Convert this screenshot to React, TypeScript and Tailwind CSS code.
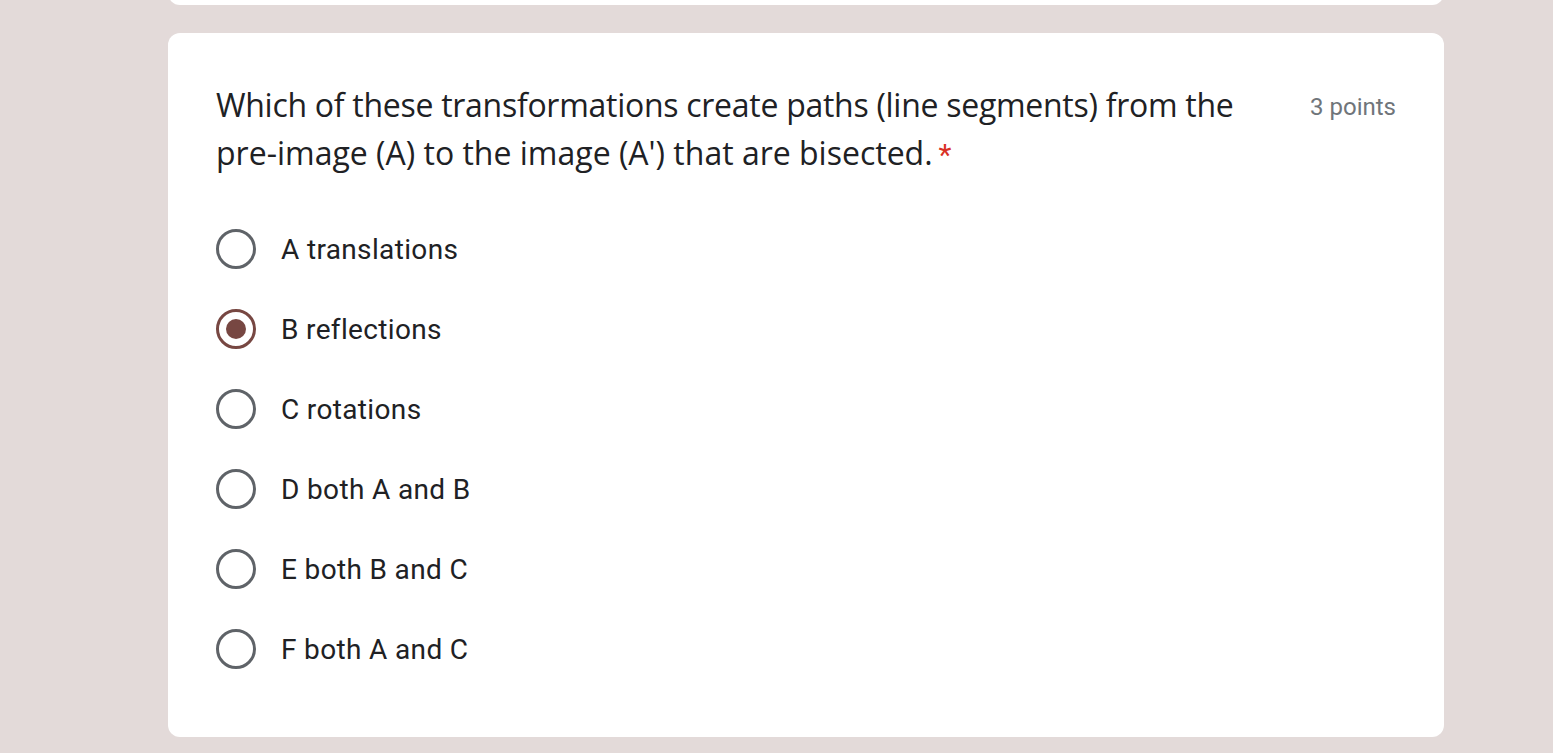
import React from "react";

const options = [
  "A translations",
  "B reflections",
  "C rotations",
  "D both A and B",
  "E both B and C",
  "F both A and C",
];

export default function App() {
  return (
    <div className="min-h-[753px] w-full bg-[#e3dad9] overflow-hidden">
      <div className="ml-[168px] w-[1276px]">
        <div className="-mt-[20px] h-[25px] rounded-[12px] bg-white" />
        <div className="mt-[28px] rounded-[12px] bg-white px-[48px] pt-[48px] pb-[48px]">
          <div className="flex items-start justify-between">
            <div
              className="h-[96px] text-[32px] leading-[48px] tracking-[-0.28px] text-[#202124]"
              style={{ fontFamily: '"Open Sans", sans-serif' }}
            >
              Which of these transformations create paths (line segments) from the
              <br />
              <span className="tracking-[0px]">pre-image (A) to the image (A') that are bisected.</span>
              <span
                className="ml-[6px] text-[30px] leading-[0] text-[#d93025]"
                style={{ fontFamily: 'Roboto, sans-serif' }}
              >
                *
              </span>
            </div>
            <div
              className="mt-[10px] text-[24px] leading-[32px] text-[#70757a] whitespace-nowrap"
              style={{ fontFamily: 'Roboto, sans-serif' }}
            >
              3 points
            </div>
          </div>
          <div className="mt-[32px] flex flex-col">
            {options.map((o, i) => {
              const selected = i === 1;
              return (
                <div key={o} className="flex h-[80px] items-center">
                  <div
                    className={
                      selected
                        ? "flex h-[40px] w-[40px] items-center justify-center rounded-full border-[3.5px] border-[#774742]"
                        : "flex h-[40px] w-[40px] items-center justify-center rounded-full border-[3.5px] border-[#5f6368]"
                    }
                  >
                    {selected && <div className="h-[20px] w-[20px] rounded-full bg-[#774742]" />}
                  </div>
                  <div
                    className="ml-[25px] pt-[2px] text-[28px] leading-[40px] tracking-[0.35px] text-[#202124]"
                    style={{ fontFamily: 'Roboto, sans-serif' }}
                  >
                    {o}
                  </div>
                </div>
              );
            })}
          </div>
        </div>
      </div>
    </div>
  );
}
